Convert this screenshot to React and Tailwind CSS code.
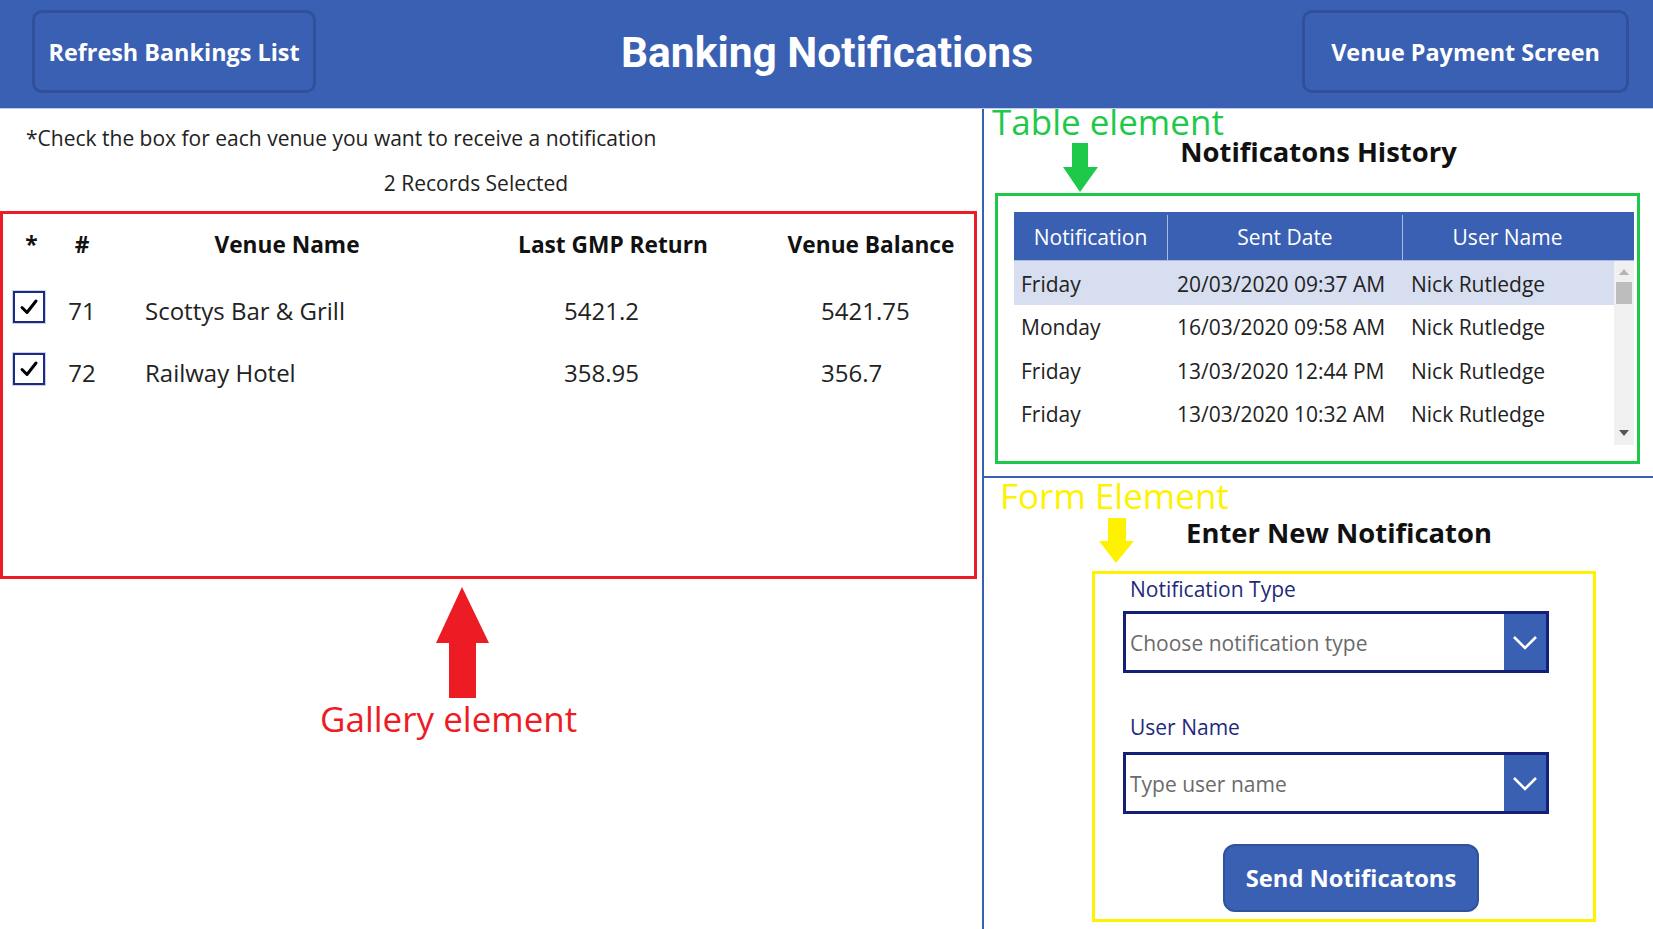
function Check() {
  return (
    <div className="w-[32px] h-[32px] border-[2px] border-[#1c2a80] shadow-[0_0_0_1px_#c9d0ea] flex items-center justify-center bg-white">
      <svg width="20" height="18" viewBox="0 0 20 18">
        <path d="M3 9.5 L8 14.5 L17 3" fill="none" stroke="#000" strokeWidth="3" strokeLinecap="round" strokeLinejoin="round" />
      </svg>
    </div>
  );
}

function Chevron() {
  return (
    <div className="w-[42px] self-stretch bg-[#3a60b3] flex items-center justify-center">
      <svg width="26" height="15" viewBox="0 0 26 15">
        <path d="M2 2 L13 13 L24 2" fill="none" stroke="#fff" strokeWidth="2.6" />
      </svg>
    </div>
  );
}

export default function App() {
  const venues = [
    { n: "71", name: "Scottys Bar & Grill", gmp: "5421.2", bal: "5421.75" },
    { n: "72", name: "Railway Hotel", gmp: "358.95", bal: "356.7" },
  ];
  const hist = [
    ["Friday", "20/03/2020 09:37 AM", "Nick Rutledge"],
    ["Monday", "16/03/2020 09:58 AM", "Nick Rutledge"],
    ["Friday", "13/03/2020 12:44 PM", "Nick Rutledge"],
    ["Friday", "13/03/2020 10:32 AM", "Nick Rutledge"],
  ];
  return (
    <div className="w-[1653px] h-[929px] overflow-hidden bg-white flex flex-col font-['Open_Sans','Noto_Sans',sans-serif] text-black">
      <header className="h-[109px] shrink-0 bg-[#3a60b3] border-b border-[#c0cbe8] flex items-start pl-[32px] pr-[24px] pt-[10px]">
        <button className="w-[284px] h-[83px] pt-[3px] rounded-[10px] border-[3px] border-[#30519a] text-white font-bold text-[23.4px]">
          Refresh Bankings List
        </button>
        <h1 className="flex-1 text-center pl-[36px] pt-[16px] text-white font-bold text-[42.5px] leading-[54px] font-['Roboto',sans-serif]">
          Banking Notifications
        </h1>
        <button className="w-[327px] h-[83px] pt-[3px] rounded-[10px] border-[3px] border-[#30519a] text-white font-bold text-[23.4px]">
          Venue Payment Screen
        </button>
      </header>

      <div className="flex-1 flex">
        {/* Left panel */}
        <div className="w-[982px] relative flex flex-col">
          <p className="pt-[15px] pl-[26px] text-[21px] leading-[28px] text-[#222]">
            *Check the box for each venue you want to receive a notification
          </p>
          <p className="mt-[17px] w-[952px] text-center text-[21px] leading-[28px] text-[#222]">2 Records Selected</p>
          <div className="mt-[14px] w-[977px] h-[368px] border-[3px] border-[#ed1c24] flex flex-col">
            <div className="h-[62px] flex items-center font-bold text-[22.7px] text-[#111]">
              <div className="w-[57px] text-center">*</div>
              <div className="w-[44px] text-center">#</div>
              <div className="w-[366px] text-center">Venue Name</div>
              <div className="w-[286px] text-center">Last GMP Return</div>
              <div className="w-[218px] text-center pl-[12px]">Venue Balance</div>
            </div>
            {venues.map((v) => (
              <div key={v.n} className="h-[62px] flex items-center text-[24px] text-[#222]">
                <div className="w-[57px] pl-[10px]">
                  <Check />
                </div>
                <div className="w-[44px] text-center pt-[7px]">{v.n}</div>
                <div className="w-[366px] pl-[41px] pt-[7px]">{v.name}</div>
                <div className="w-[286px] pl-[94px] pt-[7px]">{v.gmp}</div>
                <div className="w-[218px] pl-[65px] pt-[7px]">{v.bal}</div>
              </div>
            ))}
          </div>

          {/* Gallery annotation */}
          <svg className="absolute left-[436px] top-[478px]" width="54" height="112" viewBox="0 0 54 112">
            <polygon points="26,0 53,56 40,56 40,111 13,111 13,56 0,56" fill="#ed1c24" />
          </svg>
          <div className="absolute left-[320px] top-[588px] text-[35px] leading-[44px] text-[#ed1c24]">
            Gallery element
          </div>
        </div>

        <div className="w-[2px] bg-[#3a60b3]" />

        {/* Right panel */}
        <div className="flex-1 flex flex-col">
          <div className="h-[367px] relative flex flex-col">
            <h2 className="pt-[26px] text-center font-bold text-[27.4px] leading-[34px] text-[#111]">Notificatons History</h2>
            <div className="mt-[24px] ml-[11px] w-[645px] h-[271px] border-[3px] border-[#1ec94a] pt-[16px] pl-[16px]">
              <div className="w-[620px] h-[49px] pt-[3px] bg-[#3a60b3] flex text-white text-[21px] border-b border-[#a9b9e0]">
                <div className="w-[154px] flex items-center justify-center border-r border-[#a9b9e0]">Notification</div>
                <div className="w-[235px] flex items-center justify-center border-r border-[#a9b9e0]">Sent Date</div>
                <div className="flex-1 flex items-center justify-center pr-[22px]">User Name</div>
              </div>
              <div className="w-[620px] h-[184px] flex">
                <div className="w-[600px] flex flex-col">
                  {hist.map((r, i) => (
                    <div
                      key={i}
                      className={
                        "h-[43.5px] pt-[3px] flex items-center text-[21px] text-[#222] " + (i === 0 ? "bg-[#d7def0]" : "")
                      }
                    >
                      <div className="w-[154px] pl-[7px]">{r[0]}</div>
                      <div className="w-[235px] pl-[9px]">{r[1]}</div>
                      <div className="flex-1 pl-[8px]">{r[2]}</div>
                    </div>
                  ))}
                </div>
                <div className="w-[20px] bg-[#f0f0f0] flex flex-col items-center">
                  <svg className="mt-[8px]" width="10" height="6" viewBox="0 0 10 6">
                    <polygon points="5,0 10,6 0,6" fill="#b5b5b5" />
                  </svg>
                  <div className="mt-[7px] w-[16px] h-[22px] bg-[#bdbdbd]" />
                  <div className="flex-1" />
                  <svg className="mb-[9px]" width="10" height="6" viewBox="0 0 10 6">
                    <polygon points="0,0 10,0 5,6" fill="#555" />
                  </svg>
                </div>
              </div>
            </div>

            {/* Table annotation */}
            <div className="absolute left-[8px] top-[-9px] text-[35px] leading-[44px] text-[#1ec94a]">Table element</div>
            <svg className="absolute left-[79px] top-[34px]" width="36" height="50" viewBox="0 0 36 50">
              <polygon points="9,0 25,0 25,24 35,24 17,49 0,24 9,24" fill="#1ec94a" />
            </svg>
          </div>

          <div className="h-[2px] bg-[#3a60b3]" />

          <div className="flex-1 relative flex flex-col">
            <h2 className="pt-[38px] pl-[98px] w-[612px] text-center font-bold text-[27.4px] leading-[34px] text-[#111]">
              Enter New Notificaton
            </h2>
            <div className="mt-[21px] ml-[108px] w-[504px] h-[351px] border-[3px] border-[#fff200] flex flex-col">
              <div className="pl-[35px] h-[30px] text-[21px] leading-[30px] text-[#1f2a7c]">Notification Type</div>
              <div className="mt-[7px] ml-[28px] w-[426px] h-[62px] border-[3px] border-[#141f78] flex">
                <div className="flex-1 flex items-center pl-[4px] pt-[3px] text-[21px] text-[#6b6b6b]">Choose notification type</div>
                <Chevron />
              </div>
              <div className="mt-[39px] pl-[35px] h-[30px] text-[21px] leading-[30px] text-[#1f2a7c]">User Name</div>
              <div className="mt-[10px] ml-[28px] w-[426px] h-[62px] border-[3px] border-[#141f78] flex">
                <div className="flex-1 flex items-center pl-[4px] pt-[3px] text-[21px] text-[#6b6b6b]">Type user name</div>
                <Chevron />
              </div>
              <button className="mt-[30px] ml-[128px] w-[256px] h-[68px] pt-[2px] rounded-[12px] bg-[#3a60b3] border-[2px] border-[#2f5299] text-white font-bold text-[23.7px]">
                Send Notificatons
              </button>
            </div>

            {/* Form annotation */}
            <div className="absolute left-[16px] top-[-4px] text-[35px] leading-[44px] text-[#fff200]">Form Element</div>
            <svg className="absolute left-[115px] top-[40px]" width="36" height="46" viewBox="0 0 36 46">
              <polygon points="9,0 27,0 27,23 35,23 17,45 0,23 9,23" fill="#fff200" />
            </svg>
          </div>
        </div>
      </div>
    </div>
  );
}
